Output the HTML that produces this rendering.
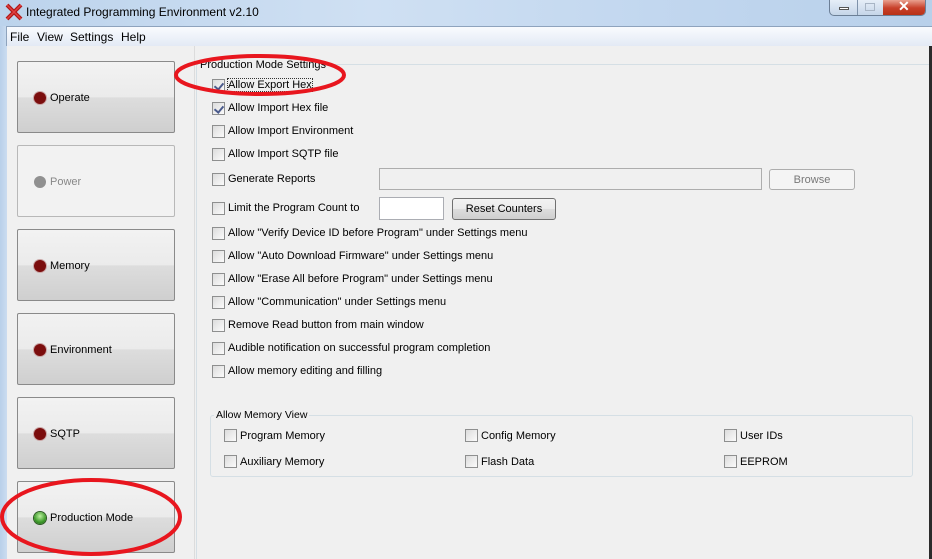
<!DOCTYPE html>
<html><head><style>
*{margin:0;padding:0;box-sizing:border-box}
body{width:932px;height:559px;overflow:hidden;position:relative;font-family:"Liberation Sans",sans-serif;font-size:11px;color:#000;background:#f0f0f0}
.abs{position:absolute}
.title{left:0;top:0;width:932px;height:26px;background:linear-gradient(90deg,#bcd3ec,#cfe0f3 40%,#c2d7ef 70%,#b8d0ea);}
.frame{left:0;top:26px;width:7px;height:533px;background:linear-gradient(90deg,#b9d0ea,#cbdcf0)}
.menu{left:6px;top:26px;width:926px;height:20px;background:linear-gradient(#f9fbfe,#e3eaf5);border-top:1px solid #8ea3bd;border-left:1px solid #8ea3bd;font-size:12px}
.menu span{position:absolute;top:3px}
.btn{position:absolute;left:17px;width:158px;height:72px;border:1px solid #8a8a8a;border-radius:2px;background:linear-gradient(#f2f2f2 0,#ebebeb 50%,#dddddd 51%,#cfcfcf 100%)}
.btn .dot{position:absolute;left:16px;top:30px;width:12px;height:12px;border-radius:50%;background:#7b0d0d;box-shadow:0 0 0 1px #c9a6a6}
.btn .t{position:absolute;left:32px;top:30px}
.cb{position:absolute;width:13px;height:13px;border:1px solid #8e8f8f;background:linear-gradient(135deg,#dcdcdc,#fbfbfb)}
.lbl{position:absolute;margin-top:1px}
.chk::after{content:"";position:absolute;left:3px;top:1px;width:4px;height:7px;border:solid #4a5a8c;border-width:0 2px 2px 0;transform:rotate(40deg)}
</style></head><body>
<div class="abs title"></div>
<svg class="abs" style="left:5px;top:3px" width="18" height="18" viewBox="0 0 18 18"><path d="M2 2L16 16M16 2L2 16" stroke="#b01818" stroke-width="4"/><path d="M2 2L16 16M16 2L2 16" stroke="#e04040" stroke-width="1.5"/></svg>
<div class="abs" style="left:26px;top:5px;font-size:12px">Integrated Programming Environment v2.10</div>
<div class="abs" style="left:829px;top:0;width:97px;height:16px;border:1px solid #6c7f96;border-top:none;border-radius:0 0 5px 5px;overflow:hidden;background:linear-gradient(#e6eef8,#c5d5e8)">
<div class="abs" style="left:27px;top:0;width:1px;height:16px;background:#7f92aa"></div>
<div class="abs" style="left:53px;top:0;width:44px;height:16px;background:linear-gradient(#e9a08f,#c8402a 50%,#b53014)"></div>
<div class="abs" style="left:9px;top:7px;width:10px;height:3px;background:#fff;border:1px solid #555"></div>
<div class="abs" style="left:35px;top:3px;width:10px;height:8px;border:1px solid #a8b5c5"></div>
<div class="abs" style="left:68px;top:-2px;color:#fff;font-weight:bold;font-size:14px">✕</div>
</div>
<div class="abs frame"></div>
<div class="abs menu"><span style="left:3px">File</span><span style="left:30px">View</span><span style="left:63px">Settings</span><span style="left:114px">Help</span></div>

<div class="btn" style="top:61px"><div class="dot"></div><div class="t">Operate</div></div>
<div class="btn" style="top:145px;background:#f2f2f2;border-color:#b8b8b8;color:#888"><div class="dot" style="background:#909090;box-shadow:none"></div><div class="t">Power</div></div>
<div class="btn" style="top:229px"><div class="dot"></div><div class="t">Memory</div></div>
<div class="btn" style="top:313px"><div class="dot"></div><div class="t">Environment</div></div>
<div class="btn" style="top:397px"><div class="dot"></div><div class="t">SQTP</div></div>
<div class="btn" style="top:481px"><div class="dot" style="background:radial-gradient(circle at 50% 35%,#bdf0a0,#3d9a2a 60%,#1f6015);box-shadow:0 0 0 1px #2c5a22"></div><div class="t">Production Mode</div></div>

<div class="abs" style="left:194px;top:46px;width:1px;height:513px;background:#dcdcdc"></div>
<div class="abs" style="left:196px;top:64px;width:734px;height:495px;border-left:1px solid #d5dfe5;border-top:1px solid #d5dfe5"></div>
<div class="abs" style="left:198px;top:59px;background:#f0f0f0;padding:0 2px">Production Mode Settings</div>
<div class="abs" style="left:929px;top:46px;width:3px;height:513px;background:#2b2b2b"></div>

<div class="cb chk" style="left:212px;top:79px"></div><div class="lbl" style="left:228px;top:78px;outline:1px dotted #333">Allow Export Hex</div>
<div class="cb chk" style="left:212px;top:102px"></div><div class="lbl" style="left:228px;top:101px">Allow Import Hex file</div>
<div class="cb" style="left:212px;top:125px"></div><div class="lbl" style="left:228px;top:124px">Allow Import Environment</div>
<div class="cb" style="left:212px;top:148px"></div><div class="lbl" style="left:228px;top:147px">Allow Import SQTP file</div>
<div class="cb" style="left:212px;top:173px"></div><div class="lbl" style="left:228px;top:172px">Generate Reports</div>
<div class="abs" style="left:379px;top:168px;width:383px;height:22px;border:1px solid #adadad;background:#f0f0f0"></div>
<div class="abs" style="left:769px;top:169px;width:86px;height:21px;border:1px solid #adadad;border-radius:3px;background:#f4f4f4;color:#777;text-align:center;line-height:20px">Browse</div>
<div class="cb" style="left:212px;top:202px"></div><div class="lbl" style="left:228px;top:201px">Limit the Program Count to</div>
<div class="abs" style="left:379px;top:197px;width:65px;height:23px;border:1px solid #abadb3;background:#fff"></div>
<div class="abs" style="left:452px;top:198px;width:104px;height:22px;border:1px solid #707070;border-radius:3px;background:linear-gradient(#f2f2f2,#ebebeb 50%,#dddddd 51%,#cfcfcf);text-align:center;line-height:21px">Reset Counters</div>
<div class="cb" style="left:212px;top:227px"></div><div class="lbl" style="left:228px;top:226px">Allow "Verify Device ID before Program" under Settings menu</div>
<div class="cb" style="left:212px;top:250px"></div><div class="lbl" style="left:228px;top:249px">Allow "Auto Download Firmware" under Settings menu</div>
<div class="cb" style="left:212px;top:273px"></div><div class="lbl" style="left:228px;top:272px">Allow "Erase All before Program" under Settings menu</div>
<div class="cb" style="left:212px;top:296px"></div><div class="lbl" style="left:228px;top:295px">Allow "Communication" under Settings menu</div>
<div class="cb" style="left:212px;top:319px"></div><div class="lbl" style="left:228px;top:318px">Remove Read button from main window</div>
<div class="cb" style="left:212px;top:342px"></div><div class="lbl" style="left:228px;top:341px">Audible notification on successful program completion</div>
<div class="cb" style="left:212px;top:365px"></div><div class="lbl" style="left:228px;top:364px">Allow memory editing and filling</div>

<div class="abs" style="left:210px;top:415px;width:703px;height:62px;border:1px solid #d5dfe5;border-radius:3px"></div>
<div class="abs" style="left:214px;top:409px;background:#f0f0f0;padding:0 2px;font-size:10.5px">Allow Memory View</div>
<div class="cb" style="left:224px;top:429px"></div><div class="lbl" style="left:240px;top:429px">Program Memory</div>
<div class="cb" style="left:465px;top:429px"></div><div class="lbl" style="left:481px;top:429px">Config Memory</div>
<div class="cb" style="left:724px;top:429px"></div><div class="lbl" style="left:740px;top:429px">User IDs</div>
<div class="cb" style="left:224px;top:455px"></div><div class="lbl" style="left:240px;top:455px">Auxiliary Memory</div>
<div class="cb" style="left:465px;top:455px"></div><div class="lbl" style="left:481px;top:455px">Flash Data</div>
<div class="cb" style="left:724px;top:455px"></div><div class="lbl" style="left:740px;top:455px">EEPROM</div>

<svg class="abs" style="left:0;top:0" width="932" height="559">
<ellipse cx="260" cy="75" rx="84" ry="19" fill="none" stroke="#e8161e" stroke-width="4"/>
<ellipse cx="91" cy="517" rx="89" ry="37" fill="none" stroke="#e8161e" stroke-width="4"/>
</svg>
</body></html>
